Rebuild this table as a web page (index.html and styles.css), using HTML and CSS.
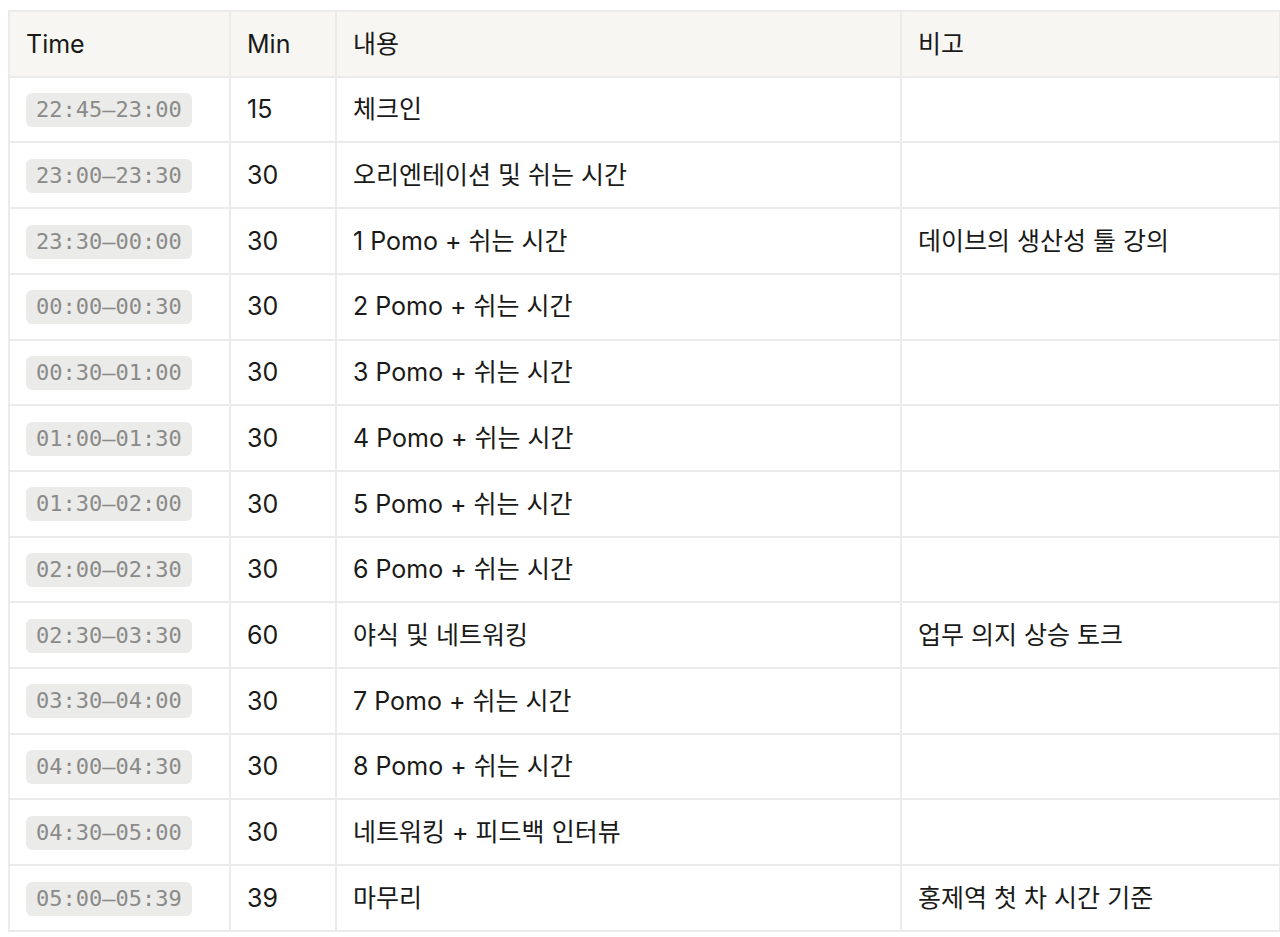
FILE: index.html
```html
<!DOCTYPE html>
<html lang="ko">
<head>
<meta charset="utf-8">
<link rel="stylesheet" href="styles.css">
</head>
<body>
<div class="wrap">
<table class="sched">
  <colgroup>
    <col class="c-time"><col class="c-min"><col class="c-body"><col class="c-note">
  </colgroup>
  <thead>
    <tr><th>Time</th><th>Min</th><th>내용</th><th>비고</th></tr>
  </thead>
  <tbody>
    <tr><td><code>22:45–23:00</code></td><td>15</td><td>체크인</td><td></td></tr>
    <tr><td><code>23:00–23:30</code></td><td>30</td><td>오리엔테이션 및 쉬는 시간</td><td></td></tr>
    <tr><td><code>23:30–00:00</code></td><td>30</td><td>1 Pomo + 쉬는 시간</td><td>데이브의 생산성 툴 강의</td></tr>
    <tr><td><code>00:00–00:30</code></td><td>30</td><td>2 Pomo + 쉬는 시간</td><td></td></tr>
    <tr><td><code>00:30–01:00</code></td><td>30</td><td>3 Pomo + 쉬는 시간</td><td></td></tr>
    <tr><td><code>01:00–01:30</code></td><td>30</td><td>4 Pomo + 쉬는 시간</td><td></td></tr>
    <tr><td><code>01:30–02:00</code></td><td>30</td><td>5 Pomo + 쉬는 시간</td><td></td></tr>
    <tr><td><code>02:00–02:30</code></td><td>30</td><td>6 Pomo + 쉬는 시간</td><td></td></tr>
    <tr><td><code>02:30–03:30</code></td><td>60</td><td>야식 및 네트워킹</td><td>업무 의지 상승 토크</td></tr>
    <tr><td><code>03:30–04:00</code></td><td>30</td><td>7 Pomo + 쉬는 시간</td><td></td></tr>
    <tr><td><code>04:00–04:30</code></td><td>30</td><td>8 Pomo + 쉬는 시간</td><td></td></tr>
    <tr><td><code>04:30–05:00</code></td><td>30</td><td>네트워킹 + 피드백 인터뷰</td><td></td></tr>
    <tr><td><code>05:00–05:39</code></td><td>39</td><td>마무리</td><td>홍제역 첫 차 시간 기준</td></tr>
  </tbody>
</table>
</div>
</body>
</html>
```
FILE: styles.css
```css
html, body {
  margin: 0;
  padding: 0;
  background: #ffffff;
}
.wrap {
  padding: 10px 1px 0 8px;
}
.sched {
  border-collapse: collapse;
  table-layout: fixed;
  width: 1271px;
  font-family: Inter, "Noto Sans CJK KR", sans-serif;
  font-size: 25px;
  color: #1a1a18;
}
.c-time { width: 221px; }
.c-min { width: 106px; }
.c-body { width: 565px; }
.c-note { width: 379px; }
.sched th,
.sched td {
  border: 2px solid #ebebe9;
  height: 65.71px;
  box-sizing: border-box;
  padding: 0 16px;
  text-align: left;
  vertical-align: middle;
  font-weight: 400;
  white-space: nowrap;
  line-height: 1.3;
}
.sched th {
  background: #f7f6f3;
}
.sched code {
  display: inline-block;
  font-family: "DejaVu Sans Mono", monospace;
  font-size: 22px;
  line-height: 34px;
  padding: 0 10px;
  border-radius: 6px;
  background: #ebebea;
  color: #8a8a88;
  vertical-align: middle;
}
```
